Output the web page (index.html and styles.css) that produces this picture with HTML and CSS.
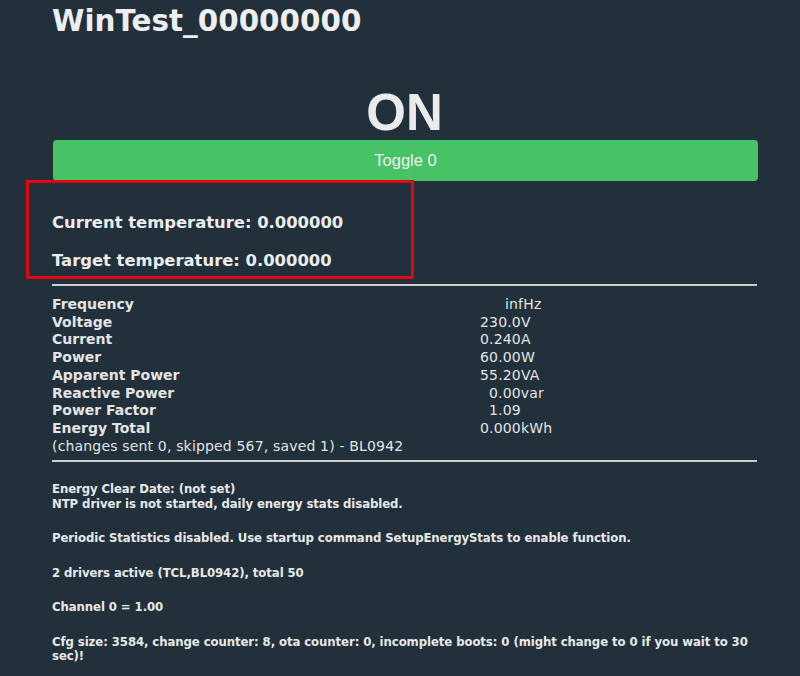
FILE: index.html
```html
<!DOCTYPE html>
<html>
<head>
<meta charset="utf-8">
<title>WinTest_00000000</title>
<link rel="stylesheet" href="styles.css">
</head>
<body>
<div class="page">
  <h1 class="title">WinTest_00000000</h1>
  <div class="state">ON</div>
  <button class="toggle">Toggle 0</button>
  <div class="temps">
    <div class="temp">Current temperature: 0.000000</div>
    <div class="temp">Target temperature: 0.000000</div>
  </div>
  <hr class="rule">
  <div class="energy">
    <div class="k">Frequency</div><div class="v pad6">infHz</div>
    <div class="k">Voltage</div><div class="v">230.0V</div>
    <div class="k">Current</div><div class="v">0.240A</div>
    <div class="k">Power</div><div class="v">60.00W</div>
    <div class="k">Apparent Power</div><div class="v">55.20VA</div>
    <div class="k">Reactive Power</div><div class="v pad2">0.00var</div>
    <div class="k">Power Factor</div><div class="v pad2">1.09</div>
    <div class="k">Energy Total</div><div class="v">0.000kWh</div>
    <div class="note">(changes sent 0, skipped 567, saved 1) - BL0942</div>
  </div>
  <hr class="rule">
  <div class="info">
    <p>Energy Clear Date: (not set)<br>NTP driver is not started, daily energy stats disabled.</p>
    <p>Periodic Statistics disabled. Use startup command SetupEnergyStats to enable function.</p>
    <p>2 drivers active (TCL,BL0942), total 50</p>
    <p>Channel 0 = 1.00</p>
    <p>Cfg size: 3584, change counter: 8, ota counter: 0, incomplete boots: 0 (might change to 0 if you wait to 30 sec)!</p>
  </div>
  <div class="mark"></div>
</div>
</body>
</html>
```
FILE: styles.css
```css
html, body {
  margin: 0;
  padding: 0;
  background: #22303c;
}
body {
  color: #ececec;
  font-family: "DejaVu Sans", Verdana, sans-serif;
}
.page {
  position: relative;
  width: 705px;
  margin-left: 52px;
  padding-top: 4px;
}
.title {
  margin: 0;
  font-size: 29.4px;
  line-height: 34px;
  font-weight: bold;
  color: #eeeeee;
}
.state {
  margin-top: 50px;
  font-family: "Liberation Sans", Arial, sans-serif;
  font-weight: bold;
  font-size: 51px;
  line-height: 50px;
  text-align: center;
  color: #ebebeb;
}
.toggle {
  display: block;
  width: 705px;
  height: 41px;
  margin: 2px 0 0 1px;
  border: none;
  border-radius: 4px;
  background: #47c266;
  color: #f0f0f0;
  font-family: "Liberation Sans", Arial, sans-serif;
  font-size: 16.5px;
  padding: 0;
}
.temps {
  padding-top: 32px;
  display: flex;
  flex-direction: column;
  gap: 19px;
}
.temp {
  font-weight: bold;
  font-size: 16.4px;
  line-height: 19px;
}
.rule {
  margin: 0;
  border: none;
  height: 2px;
  background: #c9cdd1;
}
.temps + .rule {
  margin-top: 14px;
}
.energy {
  display: grid;
  grid-template-columns: 428px 1fr;
  padding-top: 10px;
  padding-bottom: 5px;
  font-size: 14px;
  line-height: 17.7px;
  color: #e4e4e4;
}
.k {
  font-weight: bold;
}
.v, .note {
  letter-spacing: 0.17px;
}
.pad2 { padding-left: 9px; }
.pad6 { padding-left: 25px; }
.note {
  grid-column: 1 / 3;
}
.info {
  padding-top: 20px;
  font-family: "DejaVu Sans Condensed", "DejaVu Sans", sans-serif;
  font-weight: bold;
  font-size: 13px;
  line-height: 14.5px;
  letter-spacing: -0.08px;
  color: #e8e8e8;
}
.info p {
  margin: 0 0 20px 0;
}
.info p:last-child {
  margin-top: 20px;
}
.mark {
  position: absolute;
  left: -26px;
  top: 180px;
  width: 382px;
  height: 93px;
  border: 3px solid #e30613;
}
```
